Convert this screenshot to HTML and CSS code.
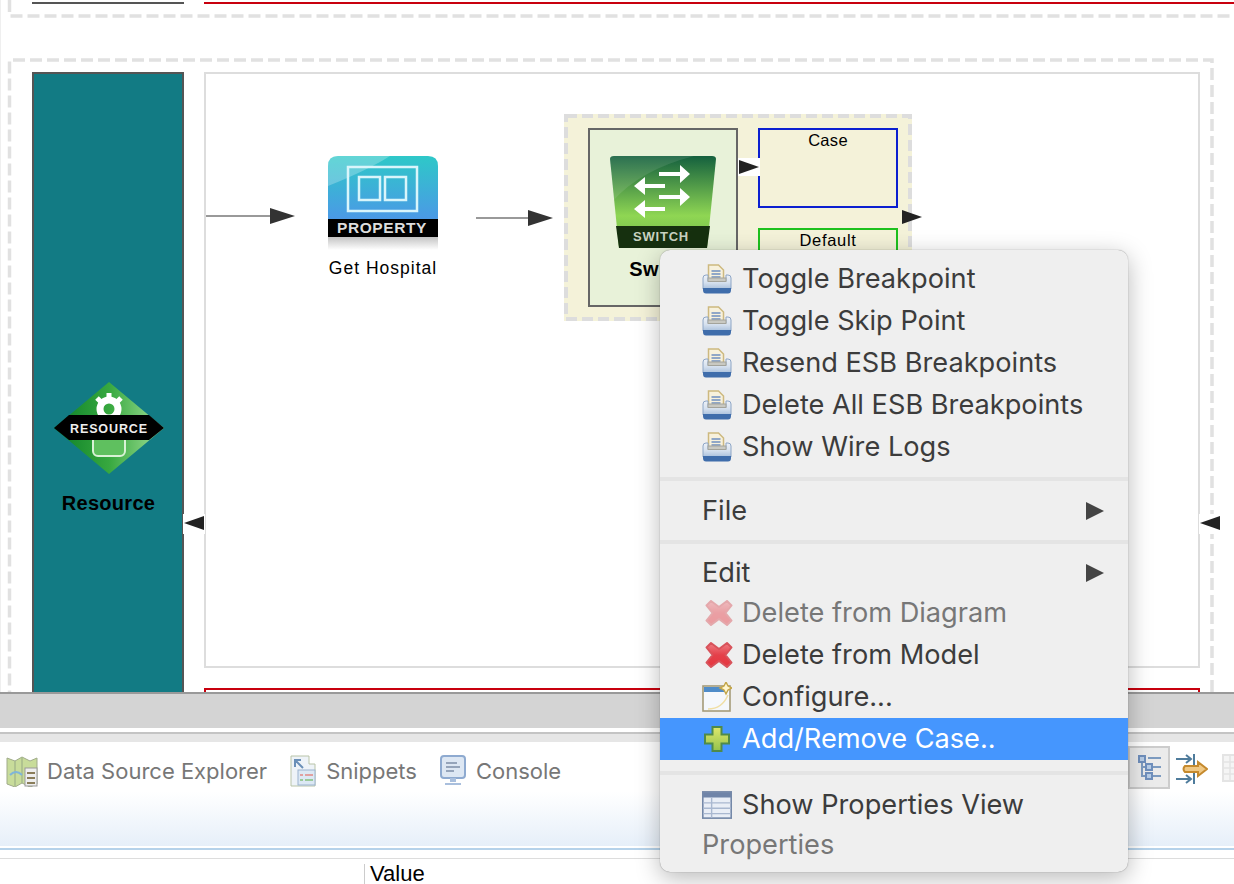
FILE: index.html
```html
<!DOCTYPE html>
<html lang="en">
<head>
<meta charset="utf-8">
<title>ESB Editor</title>
<link rel="stylesheet" href="styles.css">
</head>
<body>
<svg class="defs" aria-hidden="true">
  <defs>
    <linearGradient id="gBody" x1="0" y1="0" x2="0" y2="1"><stop offset="0" stop-color="#eef2f8"/><stop offset="0.55" stop-color="#d5e0ee"/><stop offset="1" stop-color="#a9c0dc"/></linearGradient>
    <linearGradient id="gX" x1="0" y1="0" x2="0" y2="1"><stop offset="0" stop-color="#ef7d83"/><stop offset="0.5" stop-color="#e4404a"/><stop offset="1" stop-color="#e6363f"/></linearGradient>
    <linearGradient id="gPlus" x1="0" y1="0" x2="0" y2="1"><stop offset="0" stop-color="#dfe86c"/><stop offset="1" stop-color="#93c24d"/></linearGradient>
    <symbol id="i-bp" viewBox="0 0 30 30">
      <path d="M6.500 1h10l5 5v11h-15z" fill="#f7f1dc" stroke="#cdb97f" stroke-width="1.500"/>
      <path d="M9.500 7h9M9.500 10h9M9.500 13h9" stroke="#6f8fc0" stroke-width="1.400"/>
      <path d="M1 14q0-3 3-3h2v6h18v-6h2q3 0 3 3v11H1z" fill="url(#gBody)" stroke="#8ea6c6" stroke-width="1"/>
      <rect x="6" y="14" width="18" height="3.500" fill="#c9c9c2" stroke="#a3a39b" stroke-width="1"/>
      <path d="M1 24h28v2q0 3.500-3 3.500H4q-3 0-3-3.500z" fill="#3f6dab"/>
    </symbol>
    <symbol id="i-x" viewBox="0 0 28 28">
      <path d="M6 2l8 6 8-6 4.500 4.500-6 7.500 6 7.500-4.500 4.500-8-6-8 6-4.500-4.500 6-7.500-6-7.500z" fill="url(#gX)" stroke="#d8535b" stroke-width="2" stroke-linejoin="round"/>
    </symbol>
    <symbol id="i-cfg" viewBox="0 0 30 30">
      <rect x="1" y="4" width="27" height="25" fill="#f5f8fc" stroke="#a59b78" stroke-width="1.600"/>
      <rect x="2" y="5" width="24" height="5" fill="#4f8cc9"/>
      <path d="M6 27q14 0 20-14" fill="none" stroke="#f0dfa5" stroke-width="1.500"/>
      <path d="M24 0l2 4 4 2-4 2-2 4-2-4-4-2 4-2z" fill="#fff6cf" stroke="#c4a64a" stroke-width="1.400"/>
    </symbol>
    <symbol id="i-plus" viewBox="0 0 26 26">
      <path d="M8.500 1h9v7.500H25v9h-7.500V25h-9v-7.500H1v-9h7.500z" fill="url(#gPlus)" stroke="#4f8a4a" stroke-width="2"/>
    </symbol>
    <symbol id="i-table" viewBox="0 0 28 26">
      <rect x="0.750" y="0.750" width="26.500" height="24.500" fill="#e9eef6" stroke="#7488a8" stroke-width="1.500"/>
      <rect x="1" y="1" width="26" height="5" fill="#6f84a8"/>
      <path d="M1 11h26M1 16h26M1 21h26M9 6v19" stroke="#a9b8d0" stroke-width="1.300"/>
    </symbol>
  </defs>
</svg>

<div class="page">
  <div class="canvas">
    <svg class="dashes" width="1234" height="692" aria-hidden="true">
      <path class="dash" d="M9.500 0V16H1234"/>
      <path class="dash" d="M1212 692V60H9.500V692"/>
      <line class="edge" x1="0.500" y1="0" x2="0.500" y2="692"/>
    </svg>
    <div class="topbar dark"></div>
    <div class="topbar red"></div>

    <div class="resource">
      <svg class="res-icon" width="110" height="92" viewBox="0 0 110 92">
        <defs>
          <linearGradient id="gRes" x1="0" y1="0" x2="1" y2="0"><stop offset="0" stop-color="#0b7f27"/><stop offset="0.5" stop-color="#37a83f"/><stop offset="1" stop-color="#a5e29a"/></linearGradient>
        </defs>
        <path d="M55 0l55 46-55 46L0 46z" fill="url(#gRes)"/>
        <circle cx="55" cy="27" r="9" fill="none" stroke="#fff" stroke-width="7"/>
        <path d="M55 11v5M43 16l4 4M67 16l-4 4" stroke="#fff" stroke-width="5"/>
        <rect x="39" y="50" width="32" height="24" rx="5" fill="#5fc05f" stroke="#d9f2d6" stroke-width="2"/>
        <path d="M15 33h80l15 13-15 12H15L0 46z" fill="#000"/>
        <text class="res-text" x="55" y="51" text-anchor="middle">RESOURCE</text>
      </svg>
      <div class="res-label">Resource</div>
    </div>

    <div class="flow-box"></div>
    <div class="fault-box"></div>

    <svg class="wire w1" width="90" height="18" viewBox="0 0 90 18"><line x1="0" y1="9" x2="66" y2="9"/><path d="M64 1l25 8-25 8z"/></svg>
    <svg class="wire w2" width="78" height="18" viewBox="0 0 78 18"><line x1="0" y1="9" x2="54" y2="9"/><path d="M52 1l25 8-25 8z"/></svg>

    <div class="mediator prop">
      <svg width="110" height="94" viewBox="0 0 110 94">
        <defs>
          <linearGradient id="gProp" x1="0" y1="0" x2="0" y2="1"><stop offset="0" stop-color="#2ec8c8"/><stop offset="1" stop-color="#4b99e6"/></linearGradient>
          <linearGradient id="gRefl" x1="0" y1="0" x2="0" y2="1"><stop offset="0" stop-color="#c4c4c4"/><stop offset="1" stop-color="#fff"/></linearGradient>
        </defs>
        <path d="M0 63V10Q0 0 10 0h90q10 0 10 10v53z" fill="url(#gProp)"/>
        <path d="M0 30V10Q0 0 10 0h52Q40 14 0 30z" fill="#fff" opacity="0.25"/>
        <rect x="20" y="11" width="69" height="44" fill="none" stroke="#d9f5fb" stroke-width="2.500"/>
        <rect x="31" y="21" width="21" height="23" fill="none" stroke="#d9f5fb" stroke-width="2.500"/>
        <rect x="57" y="21" width="21" height="23" fill="none" stroke="#d9f5fb" stroke-width="2.500"/>
        <rect y="63" width="110" height="18" fill="#000"/>
        <rect y="81" width="110" height="13" fill="url(#gRefl)"/>
        <text class="prop-text" x="54" y="77" text-anchor="middle">PROPERTY</text>
      </svg>
      <div class="prop-label">Get Hospital</div>
    </div>

    <div class="switch-wrap">
      <svg class="switch-dash" width="348" height="207" aria-hidden="true"><rect class="dash4" x="2" y="2" width="344" height="203"/></svg>
      <div class="switch-node">
        <svg width="106" height="92" viewBox="0 0 106 92">
          <defs>
            <linearGradient id="gSw" x1="0" y1="0" x2="0" y2="1"><stop offset="0" stop-color="#14603e"/><stop offset="0.65" stop-color="#8fd653"/><stop offset="1" stop-color="#6fb84a"/></linearGradient>
          </defs>
          <path d="M0 3Q0 0 4 0h98q4 0 4 3l-9 89H9z" fill="url(#gSw)"/>
          <path d="M0 3Q0 0 4 0h80Q30 14 3 45z" fill="#fff" opacity="0.1"/>
          <path d="M6 70h94l-3 22H9z" fill="#16300f"/>
          <g class="sw-arrows">
            <path d="M49 16h21V9l10 9-10 9v-7H49z"/>
            <path d="M55 28H35v-7l-11 9 11 9v-7h20z"/>
            <path d="M49 39h21v-7l10 9-10 9v-7H49z"/>
            <path d="M55 51H35v-7l-11 9 11 9v-7h20z"/>
          </g>
          <text class="sw-text" x="51" y="85" text-anchor="middle">SWITCH</text>
        </svg>
        <div class="sw-label">Switch</div>
      </div>
      <div class="case-box"><span>Case</span></div>
      <div class="default-box"><span>Default</span></div>
    </div>

    <div class="port p-case"><svg width="22" height="18" viewBox="0 0 22 18"><path d="M1 2l20 7-20 7z"/></svg></div>
    <div class="port p-out"><svg width="22" height="18" viewBox="0 0 22 18"><path d="M1 2l20 7-20 7z"/></svg></div>
    <div class="port p-left"><svg width="22" height="18" viewBox="0 0 22 18"><path d="M21 2L1 9l20 7z"/></svg></div>
    <div class="port p-right"><svg width="22" height="18" viewBox="0 0 22 18"><path d="M21 2L1 9l20 7z"/></svg></div>
  </div>

  <div class="sash"></div>
  <div class="rule-gap"></div>
  <div class="rule"></div>
  <div class="band"></div>

  <div class="views">
    <div class="tab">
      <svg class="tab-map" width="32" height="32" viewBox="0 0 32 32">
        <path d="M1 3l8 3 7-4 8 4 7-3v26l-7 3-8-4-7 4-8-3z" fill="#c8dc9a" stroke="#a0ab8a"/>
        <path d="M9 6v25M16 2v26" stroke="#a7b98c" stroke-width="1.500"/>
        <path d="M4 20q6-6 12 0" stroke="#7fb5d8" stroke-width="2" fill="none"/>
        <rect x="19" y="13" width="12" height="18" fill="#eee" stroke="#999"/>
        <path d="M21 18h8M21 23h8M21 28h8" stroke="#8a7d5a" stroke-width="2"/>
      </svg>
      <span>Data Source Explorer</span>
    </div>
    <div class="tab">
      <svg width="26" height="32" viewBox="0 0 26 32">
        <path d="M1 1h18v8h6v22H1z" fill="#eef3f8" stroke="#b9c4a8"/>
        <path d="M5 12V5h6M5 5l8 8" stroke="#6a8fb8" stroke-width="2" fill="none"/>
        <rect x="8" y="15" width="17" height="15" fill="#dce8f4" stroke="#9cb4cf"/>
        <path d="M10 20h3M15 20h8" stroke="#e0a0a0" stroke-width="2"/>
        <path d="M10 25h3M15 25h8" stroke="#9ac99a" stroke-width="2"/>
      </svg>
      <span>Snippets</span>
    </div>
    <div class="tab">
      <svg width="26" height="32" viewBox="0 0 26 32">
        <rect x="1" y="1" width="24" height="22" rx="3" fill="#dde7f3" stroke="#8eaad0" stroke-width="2"/>
        <path d="M6 8h11M6 12h14M6 16h8" stroke="#7d8fa8" stroke-width="1.600"/>
        <path d="M10 23h6v4h-6zM5 28h16v2H5z" fill="#a9bfdd"/>
      </svg>
      <span>Console</span>
    </div>
    <div class="tools">
      <div class="tool-active">
        <svg width="23" height="25" viewBox="0 0 23 25">
          <path d="M4 5v16h4M4 12h4M10 3h13M15 12h8M15 21h8" stroke="#7d9bc0" stroke-width="2" fill="none"/>
          <rect x="1" y="1" width="6" height="6" fill="#b8cde6" stroke="#6f8fbc" stroke-width="2"/>
          <rect x="8" y="9" width="6" height="6" fill="#b8cde6" stroke="#6f8fbc" stroke-width="2"/>
          <rect x="8" y="18" width="6" height="6" fill="#b8cde6" stroke="#6f8fbc" stroke-width="2"/>
        </svg>
      </div>
      <svg class="tool-merge" width="32" height="32" viewBox="0 0 32 32">
        <path d="M0 5h14M0 25h14M10 1l5 4-5 4M10 21l5 4-5 4M18 0v11M18 19v11" stroke="#4f7c9c" stroke-width="2" fill="none"/>
        <path d="M9 12h13V8l9 7-9 7v-4H9q-3-3 0-6z" fill="#f0c884" stroke="#c58a2e" stroke-width="2"/>
      </svg>
      <svg class="tool-table" width="20" height="28" viewBox="0 0 20 28">
        <rect x="1" y="1" width="19" height="26" fill="#f5f5f5" stroke="#e4e4e4" stroke-width="2"/>
        <path d="M1 8h19M1 14h19M1 20h19M8 1v26" stroke="#e4e4e4" stroke-width="1.500"/>
      </svg>
    </div>
  </div>

  <div class="rule-white"></div>
  <div class="rule-blue"></div>
  <div class="rule-space"></div>
  <div class="rule-head"></div>
  <div class="table-head">
    <div class="col-prop"></div>
    <div class="col-value">Value</div>
  </div>
</div>

<div class="menu">
  <div class="item"><svg class="ico"><use href="#i-bp"/></svg><span>Toggle Breakpoint</span></div>
  <div class="item"><svg class="ico"><use href="#i-bp"/></svg><span>Toggle Skip Point</span></div>
  <div class="item"><svg class="ico"><use href="#i-bp"/></svg><span>Resend ESB Breakpoints</span></div>
  <div class="item"><svg class="ico"><use href="#i-bp"/></svg><span>Delete All ESB Breakpoints</span></div>
  <div class="item"><svg class="ico"><use href="#i-bp"/></svg><span>Show Wire Logs</span></div>
  <div class="sep s1"></div>
  <div class="item plain"><span>File</span><i class="sub"></i></div>
  <div class="sep s2"></div>
  <div class="item plain"><span>Edit</span><i class="sub"></i></div>
  <div class="item tight disabled"><svg class="ico ico-x faded"><use href="#i-x"/></svg><span>Delete from Diagram</span></div>
  <div class="item"><svg class="ico ico-x"><use href="#i-x"/></svg><span>Delete from Model</span></div>
  <div class="item"><svg class="ico"><use href="#i-cfg"/></svg><span>Configure...</span></div>
  <div class="item hi"><svg class="ico ico-plus"><use href="#i-plus"/></svg><span>Add/Remove Case..</span></div>
  <div class="sep s3"></div>
  <div class="item"><svg class="ico"><use href="#i-table"/></svg><span>Show Properties View</span></div>
  <div class="item plain tight disabled"><span>Properties</span></div>
</div>
</body>
</html>
```

FILE: styles.css
```css
* { box-sizing: border-box; }
html, body { margin: 0; height: 100%; background: #fff; overflow: hidden; }
body { font-family: Inter, "Liberation Sans", sans-serif; position: relative; }
.defs { position: absolute; width: 0; height: 0; }

.page { width: 1234px; height: 884px; display: flex; flex-direction: column; overflow: hidden; }

/* diagram canvas */
.canvas { position: relative; height: 692px; flex: none; overflow: hidden; background: #fff; }
.dashes { position: absolute; left: 0; top: 0; }
.dash { fill: none; stroke: #e1e1e1; stroke-width: 3.5; stroke-dasharray: 12 5; }
.edge { stroke: #efefef; stroke-width: 1; }
.topbar { position: absolute; top: 2px; height: 2px; }
.topbar.dark { left: 32px; width: 152px; background: #555; }
.topbar.red { left: 204px; right: 0; background: #c8000e; }

.resource { position: absolute; left: 32px; top: 72px; width: 152px; height: 622px; background: #127b84; border: 2px solid #555; display: flex; flex-direction: column; align-items: center; padding-top: 308px; }
.res-icon { display: block; flex: none; margin-left: 2px; }
.res-text { font-family: "Liberation Sans", sans-serif; font-size: 12.5px; font-weight: 700; fill: #eee; letter-spacing: 0.9px; }
.res-label { margin-top: 17px; margin-left: 1px; font: 700 20px/24px "Liberation Sans", sans-serif; letter-spacing: 0.3px; color: #000; }

.flow-box { position: absolute; left: 204px; top: 72px; width: 996px; height: 596px; border: 2px solid #ddd; background: #fff; }
.fault-box { position: absolute; left: 204px; top: 688px; width: 996px; height: 40px; border: 2px solid #c8000e; background: #fff; }

.wire { position: absolute; }
.wire line { stroke: #999; stroke-width: 2; }
.wire path { fill: #333; }
.w1 { left: 206px; top: 207px; }
.w2 { left: 476px; top: 209px; }

.mediator { position: absolute; }
.mediator svg { display: block; }
.prop { left: 328px; top: 156px; width: 110px; }
.prop-text { font-family: "Liberation Sans", sans-serif; font-size: 15.5px; font-weight: 700; fill: #ddd; letter-spacing: 0.6px; }
.prop-label { margin-top: 8px; text-align: center; font: 17.500px/20px "Liberation Sans", sans-serif; letter-spacing: 1px; color: #000; white-space: nowrap; }

.switch-wrap { position: absolute; left: 564px; top: 114px; width: 348px; height: 207px; background: #f4f2d9; }
.switch-dash { position: absolute; left: 0; top: 0; }
.dash4 { fill: none; stroke: #ddd; stroke-width: 4; stroke-dasharray: 11 5; }
.switch-node { position: absolute; left: 24px; top: 14px; width: 150px; height: 179px; background: #e8f2d9; border: 2px solid #666; display: flex; flex-direction: column; align-items: center; padding-top: 26px; }
.switch-node svg { display: block; flex: none; }
.sw-arrows path { fill: #fff; }
.sw-text { font-family: "Liberation Sans", sans-serif; font-size: 13px; font-weight: 700; fill: #c8d2c0; letter-spacing: 0.8px; }
.sw-label { margin-top: 10px; font: 700 20px/22px "Liberation Sans", sans-serif; letter-spacing: 0.5px; color: #000; }
.case-box, .default-box { position: absolute; left: 194px; width: 140px; text-align: center; font: 16.500px/18px "Liberation Sans", sans-serif; letter-spacing: 0.3px; color: #000; background: #f4f2d9; }
.case-box { top: 14px; height: 80px; border: 2px solid #0b1fd0; padding-top: 1px; }
.default-box { top: 114px; height: 60px; border: 2px solid #1dc11d; padding-top: 1px; letter-spacing: 0.7px; }

.port { position: absolute; width: 22px; height: 18px; background: #fff; display: flex; }
.port svg { display: block; }
.port path { fill: #222; }
.p-case { left: 738px; top: 158px; }
.p-out { left: 901px; top: 208px; background: transparent; }
.p-left { left: 183px; top: 514px; height: 20px; }
.p-right { left: 1199px; top: 514px; height: 20px; }

/* sash and rules */
.sash { height: 36px; flex: none; background: #d4d4d4; border-top: 2px solid #999; position: relative; }
.rule-gap { height: 4px; flex: none; background: #fff; }
.rule { height: 2px; flex: none; background: #c4c4c4; }
.band { height: 8px; flex: none; background: #e6e6e6; }

/* view tabs */
.views { height: 104px; flex: none; display: flex; align-items: flex-start; padding: 13px 0 0 6px; background: linear-gradient(#fff 0, #fff 48%, #e6eff9 100%); position: relative; font-size: 22px; color: #777; }
.tab { display: flex; align-items: center; gap: 10px; margin-right: 23px; height: 32px; white-space: nowrap; }
.tab svg { flex: none; display: block; }
.tab span { font: 22px/32px Inter, "Liberation Sans", sans-serif; }
.tab-map { margin-right: -1px; }
.tools { position: absolute; left: 1128px; top: 4px; display: flex; align-items: flex-start; gap: 6px; }
.tool-active { width: 42px; height: 43px; background: #ebebeb; border: 2px solid #ccc; display: flex; align-items: center; justify-content: center; }
.tool-active svg { display: block; }
.tool-merge { margin-top: 8px; }
.tool-table { margin-top: 8px; margin-left: 8px; }

.rule-white { height: 2px; flex: none; background: #fff; }
.rule-blue { height: 2px; flex: none; background: #b5d2ea; }
.rule-space { height: 8px; flex: none; background: #fff; }
.rule-head { height: 1px; flex: none; background: #ddd; }
.table-head { display: flex; padding-top: 5px; flex: none; }
.col-prop { width: 365px; border-right: 1px solid #ccc; height: 20px; }
.col-value { padding-left: 5px; font: 22px/20px "Liberation Sans", sans-serif; color: #000; }

/* context menu */
.menu { position: absolute; left: 660px; top: 250px; width: 468px; height: 622px; padding-top: 8px; background: #efefef; border-radius: 10px; box-shadow: 0 0 1px rgba(0,0,0,.5), 0 6px 24px rgba(0,0,0,.28); color: #3c3c3c; font-size: 27.2px; display: flex; flex-direction: column; }
.item { height: 42px; flex: none; display: flex; align-items: center; padding-left: 42px; position: relative; white-space: nowrap; }
.item span { line-height: 42px; }
.item.tight { margin-top: -2px; }
.item.disabled { color: #777; }
.item.hi { background: #4596fe; color: #fff; }
.ico { width: 30px; height: 30px; flex: none; margin-right: 10px; display: block; }
.ico-x { width: 28px; height: 28px; margin-left: 3px; margin-right: 9px; }
.ico-plus { width: 26px; height: 26px; margin-left: 2px; margin-right: 12px; }
.faded { opacity: 0.45; }
.sub { position: absolute; right: 24px; top: 12px; width: 0; height: 0; border-left: 18px solid #444; border-top: 9px solid transparent; border-bottom: 9px solid transparent; }
.sep { flex: none; background: #e4e4e4; height: 4px; }
.s1 { margin: 9px 0 9px; }
.s2 { margin: 8px 0 8px; }
.s3 { margin: 11px 0 9px; }
```
